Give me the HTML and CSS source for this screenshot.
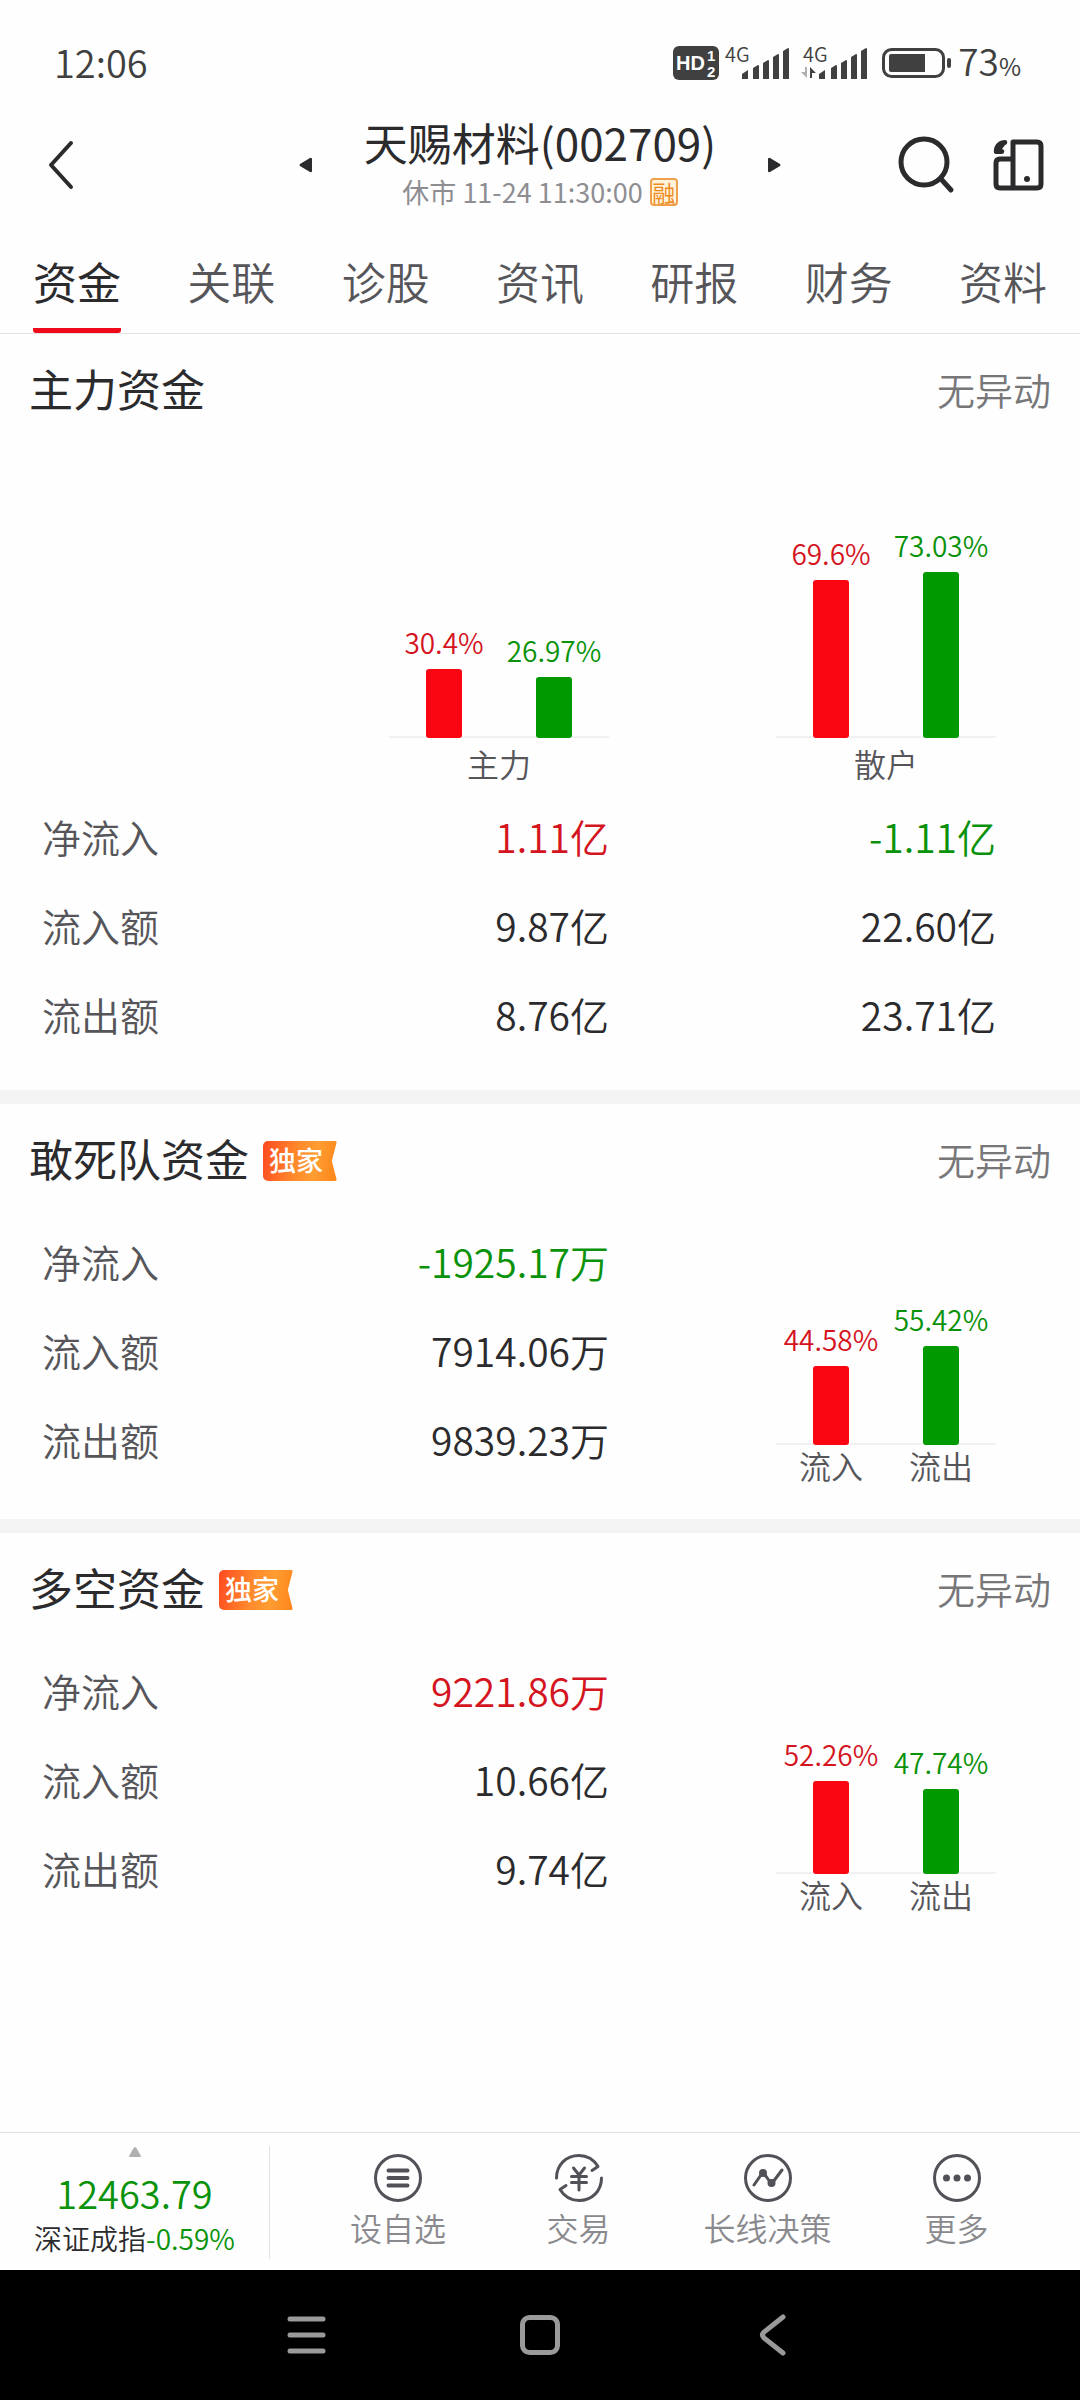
FILE: index.html
```html
<!DOCTYPE html>
<html lang="zh-CN">
<head>
<meta charset="utf-8">
<meta name="viewport" content="width=device-width, initial-scale=1">
<title>天赐材料(002709)</title>
<link rel="stylesheet" href="styles.css">
</head>
<body>
<div class="status">
  <span class="clock">12:06</span>
  <div class="status-icons">
    <svg class="hd" width="46" height="34" viewBox="0 0 46 34" role="img" aria-label="HD">
      <rect width="46" height="34" rx="6" fill="#404040"/>
      <text x="3" y="24" font-size="20">HD</text>
      <text x="34" y="15" font-size="15">1</text>
      <text x="34" y="31" font-size="15">2</text>
    </svg>
    <svg class="signal" width="66" height="34" viewBox="0 0 66 34">
      <text x="0" y="16" font-size="20">4G</text>
      <path d="M17 33v-5l6-4v9zM28 33V22l5-3q1 0 1 1v13zM38 33V17l5-3q1 0 1 1v18zM48 33V11l5-3q1 0 1 1v24zM58 33V5l5-3q1 0 1 1v30z"/>
    </svg>
    <svg class="signal" width="68" height="34" viewBox="0 0 68 34">
      <text x="2" y="16" font-size="20">4G</text>
      <path fill="#b0b0b0" d="M4 21h2v11l-6-6h4z"/>
      <path d="M9 32h2v-5h4l-6-6z"/>
      <path d="M18 33v-5l6-4v9zM30 33V22l5-3q1 0 1 1v13zM40 33V17l5-3q1 0 1 1v18zM50 33V11l5-3q1 0 1 1v24zM60 33V5l5-3q1 0 1 1v30z"/>
    </svg>
    <svg class="battery" width="70" height="30" viewBox="0 0 70 30" role="img" aria-label="电量">
      <rect x="1.5" y="1.5" width="60" height="27" rx="8" fill="none" stroke="#404040" stroke-width="3"/>
      <path fill="#404040" d="M9 6h34v18H9q-2 0-2-2V8q0-2 2-2z"/>
      <rect x="65" y="10" width="4" height="10" rx="2" fill="#404040"/>
    </svg>
    <span class="power">73<small>%</small></span>
  </div>
</div>

<header class="header">
  <button class="icon-btn back" aria-label="返回">
    <svg width="26" height="50" viewBox="0 0 26 50"><path d="M23 3 3 25l20 22" fill="none" stroke="#2b2b2d" stroke-width="4" stroke-linecap="round" stroke-linejoin="round"/></svg>
  </button>
  <div class="stock">
    <button class="icon-btn" aria-label="上一只">
      <svg width="14" height="16" viewBox="0 0 14 16"><path d="M13 1.500v13q-1 1-2 .5L1 9Q0 8 1 7l10-6q1-.5 2 .5z" fill="#2b2b2d"/></svg>
    </button>
    <div class="stock-name">
      <h1>天赐材料(002709)</h1>
      <p>休市 11-24 11:30:00<span class="margin-tag">融</span></p>
    </div>
    <button class="icon-btn" aria-label="下一只">
      <svg width="14" height="16" viewBox="0 0 14 16"><path d="M1 1.500v13q1 1 2 .5L13 9q1-1 0-2L3 1Q2 .5 1 1.500z" fill="#2b2b2d"/></svg>
    </button>
  </div>
  <div class="tools">
    <button class="icon-btn" aria-label="搜索">
      <svg width="56" height="58" viewBox="0 0 56 58" fill="none" stroke="#2b2b2d" stroke-width="5" stroke-linecap="round"><circle cx="26" cy="26" r="23"/><path d="m43 43 10 11"/></svg>
    </button>
    <button class="icon-btn" aria-label="横屏">
      <svg width="51" height="52" viewBox="0 0 51 52" fill="none" stroke="#2b2b2d" stroke-width="5" stroke-linejoin="round"><path d="M20 3h24q4 0 4 4v38q0 4-4 4H20zM20 20H7q-4 0-4 4v21q0 4 4 4h13"/><circle cx="34" cy="40" r="3" fill="#2b2b2d" stroke="none"/><path d="M12 1C6 1 2 5 1 10q-1 5 2 5h6q3-1 2-4l-2-1 3-4q3-1 2-4-1-1-2-1z" fill="#2b2b2d" stroke="none"/></svg>
    </button>
  </div>
</header>

<nav class="tabs">
  <a href="#fund" class="active" aria-current="page">资金</a>
  <a href="#relation">关联</a>
  <a href="#diagnose">诊股</a>
  <a href="#news">资讯</a>
  <a href="#report">研报</a>
  <a href="#finance">财务</a>
  <a href="#profile">资料</a>
</nav>

<main>
  <section class="panel" id="fund">
    <div class="panel-head"><h2>主力资金</h2><span class="note">无异动</span></div>
    <table class="figures main-figures">
      <thead>
        <tr>
          <td></td>
          <th scope="col">
            <div class="chart">
              <div class="bars tall">
                <div class="col up"><span>30.4%</span><i style="height:69px"></i></div>
                <div class="col down"><span>26.97%</span><i style="height:61px"></i></div>
              </div>
              <div class="chart-label">主力</div>
            </div>
          </th>
          <th scope="col">
            <div class="chart">
              <div class="bars tall">
                <div class="col up"><span>69.6%</span><i style="height:158px"></i></div>
                <div class="col down"><span>73.03%</span><i style="height:166px"></i></div>
              </div>
              <div class="chart-label">散户</div>
            </div>
          </th>
        </tr>
      </thead>
      <tbody>
        <tr><th scope="row">净流入</th><td class="up">1.11亿</td><td class="down">-1.11亿</td></tr>
        <tr><th scope="row">流入额</th><td>9.87亿</td><td>22.60亿</td></tr>
        <tr><th scope="row">流出额</th><td>8.76亿</td><td>23.71亿</td></tr>
      </tbody>
    </table>
  </section>

  <section class="panel">
    <div class="panel-head"><h2>敢死队资金</h2><span class="badge">独家</span><span class="note">无异动</span></div>
    <div class="split">
      <table class="figures">
        <tbody>
          <tr><th scope="row">净流入</th><td class="down">-1925.17万</td></tr>
          <tr><th scope="row">流入额</th><td>7914.06万</td></tr>
          <tr><th scope="row">流出额</th><td>9839.23万</td></tr>
        </tbody>
      </table>
      <div class="chart">
        <div class="bars">
          <div class="col up"><span>44.58%</span><i style="height:79px"></i></div>
          <div class="col down"><span>55.42%</span><i style="height:99px"></i></div>
        </div>
        <div class="chart-label pair"><span>流入</span><span>流出</span></div>
      </div>
    </div>
  </section>

  <section class="panel">
    <div class="panel-head"><h2>多空资金</h2><span class="badge">独家</span><span class="note">无异动</span></div>
    <div class="split">
      <table class="figures">
        <tbody>
          <tr><th scope="row">净流入</th><td class="up">9221.86万</td></tr>
          <tr><th scope="row">流入额</th><td>10.66亿</td></tr>
          <tr><th scope="row">流出额</th><td>9.74亿</td></tr>
        </tbody>
      </table>
      <div class="chart">
        <div class="bars">
          <div class="col up"><span>52.26%</span><i style="height:93px"></i></div>
          <div class="col down"><span>47.74%</span><i style="height:85px"></i></div>
        </div>
        <div class="chart-label pair"><span>流入</span><span>流出</span></div>
      </div>
    </div>
  </section>
</main>

<footer class="toolbar">
  <button class="index">
    <svg width="12" height="10" viewBox="0 0 12 10"><path d="M6 0q1 0 2 2l4 7q0 1-1 1H1Q0 10 0 9l4-7q1-2 2-2z" fill="#b0b0b2"/></svg>
    <strong>12463.79</strong>
    <span>深证成指<em>-0.59%</em></span>
  </button>
  <div class="actions">
    <button>
      <svg width="50" height="50" viewBox="0 0 50 50"><circle cx="25" cy="25" r="22.500"/><path stroke-width="4" d="M15.500 17.500h19M15.500 25h19M15.500 32.500h19"/></svg>
      设自选
    </button>
    <button>
      <svg width="50" height="50" viewBox="0 0 50 50"><path d="M2.500 25C2.500 12 12 2.500 25 2.500c8 0 15 4.500 19 11l-6 4M47.500 25C47.500 38 38 47.500 25 47.500c-8 0-15-4.500-19-11l6-4"/><path d="m19.500 15 5.500 7 5.500-7M17.500 23.500h15M17.500 29.500h15M25 22v15"/></svg>
      交易
    </button>
    <button>
      <svg width="50" height="50" viewBox="0 0 50 50"><circle cx="25" cy="25" r="22.500"/><path d="m11 32 9-13 8.500 12L39 17"/><circle class="dot" cx="20" cy="20" r="4"/><circle class="dot" cx="28.500" cy="30" r="4"/></svg>
      长线决策
    </button>
    <button>
      <svg width="50" height="50" viewBox="0 0 50 50"><circle cx="25" cy="25" r="22.500"/><circle class="dot" cx="14.500" cy="25" r="3.500"/><circle class="dot" cx="25" cy="25" r="3.500"/><circle class="dot" cx="35.500" cy="25" r="3.500"/></svg>
      更多
    </button>
  </div>
</footer>

<div class="sysnav">
  <button class="icon-btn" aria-label="任务"><svg width="40" height="42" viewBox="0 0 40 42"><path d="M4 5h33M4 21h33M4 37h33"/></svg></button>
  <button class="icon-btn" aria-label="主页"><svg width="40" height="42" viewBox="0 0 40 42"><rect x="2.500" y="3.500" width="35" height="35" rx="7"/></svg></button>
  <button class="icon-btn" aria-label="返回"><svg width="40" height="42" viewBox="0 0 40 42"><path d="M30 3 11 18q-3 3 0 6l19 15"/></svg></button>
</div>
</body>
</html>
```
FILE: styles.css
```css
* { box-sizing: border-box; }

body {
  margin: 0;
  min-height: 100vh;
  display: flex;
  flex-direction: column;
  background: #fefefe;
  color: #2b2b2d;
  font-family: "Noto Sans CJK SC", sans-serif;
  font-weight: 350;
}

button {
  padding: 0;
  border: 0;
  background: none;
  color: inherit;
  font: inherit;
}

h1, h2, p { margin: 0; font-weight: 400; }
svg { display: block; flex: none; overflow: visible; }
.icon-btn { display: flex; }
.up { color: #d4141e; }
.down { color: #0a920a; }

/* phone status bar */
.status {
  height: 110px;
  padding: 16px 59px 0 54px;
  display: flex;
  align-items: center;
  justify-content: space-between;
  color: #404040;
}
.clock { font-size: 38px; padding-bottom: 4px; }
.status-icons { display: flex; align-items: center; }
.hd text { fill: #fefefe; font-family: "Liberation Sans", sans-serif; font-weight: 700; }
.signal { fill: #404040; margin-left: 6px; }
.signal + .signal { margin-left: 10px; }
.battery { margin-left: 13px; }
.power { margin-left: 6px; font-size: 37px; line-height: 34px; }
.power small { font-size: 24px; font-weight: 400; }

/* stock header */
.header {
  height: 110px;
  padding: 0 36px;
  display: grid;
  grid-template-columns: 1fr auto 1fr;
  align-items: center;
}
.back { margin-left: 12px; }
.stock { display: flex; align-items: center; gap: 51px; }
.stock-name {
  display: flex;
  flex-direction: column;
  align-items: center;
}
h1 { font-size: 44px; line-height: 54px; }
.stock-name p {
  display: flex;
  align-items: center;
  color: #8e8e92;
  font-size: 27px;
  line-height: 46px;
}
.margin-tag {
  margin-left: 7px;
  width: 28px;
  height: 28px;
  border: 2px solid #efa04c;
  border-radius: 4px;
  background: #fff3da;
  color: #ee8a1e;
  font-size: 23px;
  font-weight: 400;
  line-height: 24px;
  text-align: center;
}
.tools { display: flex; justify-content: flex-end; align-items: center; gap: 39px; }

.tabs {
  height: 114px;
  padding: 0 33px;
  display: flex;
  justify-content: space-between;
  border-bottom: 1px solid #e2e2e4;
}
.tabs a {
  height: 113px;
  color: #56565a;
  font-size: 44px;
  line-height: 122px;
  text-decoration: none;
}
.tabs .active {
  color: #2b2b2d;
  font-weight: 400;
  border-bottom: 5px solid #ee0a18;
  border-radius: 3px;
}

main { flex: 1; }
.panel + .panel { border-top: 14px solid #f4f4f4; }
.panel-head {
  height: 114px;
  padding: 0 29px;
  display: flex;
  align-items: center;
}
h2 { padding-bottom: 6px; font-size: 44px; }
.note { margin-left: auto; padding-bottom: 6px; color: #77777a; font-size: 38px; }
.badge {
  margin-left: 14px;
  width: 74px;
  height: 40px;
  padding-right: 8px;
  border-radius: 5px 2px 2px 5px;
  background: linear-gradient(100deg, #ff4a20, #ff8a2c 45%, #ff9d32 70%, #ff8418);
  clip-path: polygon(0 0, 100% 0, 93% 50%, 100% 100%, 0 100%);
  color: #fff;
  font-size: 27px;
  font-weight: 500;
  line-height: 38px;
  text-align: center;
}

.figures {
  table-layout: fixed;
  border-collapse: collapse;
  font-size: 39px;
}
.figures th, .figures td { padding: 0; font-weight: 350; }
.figures tbody tr { height: 89px; }
.figures tbody th, .figures tbody td { padding-bottom: 8px; }
.figures tbody th { color: #56565a; text-align: left; }
.figures tbody td { text-align: right; }
.main-figures { width: calc(100% - 126px); margin: 0 84px 28px 42px; }
.main-figures thead td { width: 20%; }
.main-figures thead th:last-child { width: 387px; }

.split {
  padding: 2px 84px 28px 42px;
  display: flex;
  align-items: flex-start;
}
.split .figures { width: calc(100% - 387px); }

.chart { width: 220px; margin-left: auto; }
.bars {
  height: 225px;
  display: flex;
  align-items: flex-end;
  background: linear-gradient(#f1f1f1, #f1f1f1) bottom / 100% 2px no-repeat;
}
.bars.tall { height: 290px; }
.col {
  flex: 1;
  display: flex;
  flex-direction: column;
  align-items: center;
  font-size: 28px;
  line-height: 30px;
  white-space: nowrap;
}
.col i { width: 36px; margin-top: 12px; border-radius: 3px; }
.col.up i { background: #fa0512; }
.col.down i { background: #009a00; }
.chart-label {
  padding-bottom: 6px;
  color: #56565a;
  font-size: 32px;
  line-height: 51px;
  text-align: center;
}
.chart-label.pair { display: flex; line-height: 40px; }
.pair span { flex: 1; }

/* bottom toolbar */
.toolbar { height: 138px; display: flex; border-top: 1px solid #e2e2e4; }
.index {
  width: 25%;
  height: 113px;
  margin-top: 13px;
  border-right: 1px solid #e2e2e4;
  display: flex;
  flex-direction: column;
  align-items: center;
  justify-content: center;
}
.index svg { margin-bottom: 11px; }
.index strong { font-size: 38px; font-weight: 350; line-height: 50px; color: #0a920a; }
.index span { font-size: 28px; line-height: 40px; }
.index em { font-style: normal; color: #0a920a; }
.actions {
  flex: 1;
  padding: 0 29px 0 42px;
  display: grid;
  grid-template-columns: 172fr 189fr 189fr 189fr;
}
.actions button {
  padding-top: 20px;
  display: flex;
  flex-direction: column;
  align-items: center;
  gap: 4px;
  color: #8a8a8e;
  font-size: 32px;
  line-height: 40px;
}
.actions svg {
  fill: none;
  stroke: #515158;
  stroke-width: 3;
  stroke-linecap: round;
  stroke-linejoin: round;
}
.actions .dot { fill: #515158; stroke: none; }

.sysnav {
  height: 130px;
  padding: 0 287px 0 286px;
  display: flex;
  align-items: center;
  justify-content: space-between;
  background: #000;
}
.sysnav svg {
  fill: none;
  stroke: #9a9a9a;
  stroke-width: 5;
  stroke-linecap: round;
}
```
